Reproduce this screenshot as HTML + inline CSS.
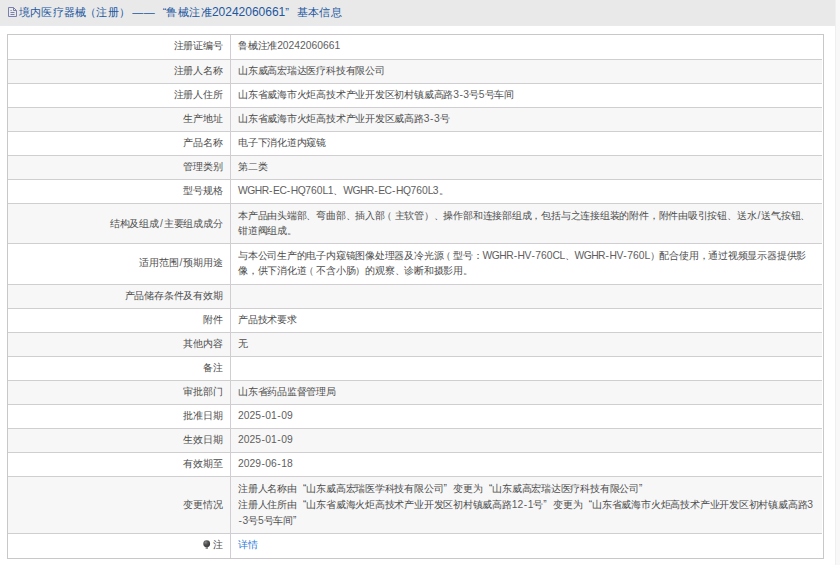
<!DOCTYPE html>
<html><head><meta charset="utf-8">
<style>
html,body{margin:0;padding:0;}
body{width:840px;height:565px;overflow:hidden;position:relative;background:#fff;font-family:"Liberation Sans",sans-serif;font-size:10px;color:#4d4d4d;letter-spacing:-0.22px;}
b{font-weight:normal;font-size:10.3px;letter-spacing:0;color:#5e5e5e;}
s{text-decoration:none;padding:0 0.51px;}
i{font-style:normal;padding:0 1.05px;}
u{text-decoration:none;letter-spacing:-0.5px;}
q{display:inline-block;width:9.78px;letter-spacing:0;}
q:before,q:after{content:none;}
em{font-style:normal;position:relative;}
.lp{left:-0.25em;} .dn{left:0;}
#hd .lp{left:-0.2em;margin-right:-2px;} #hd .rp{margin-right:2px;}
.qo{text-align:right;} .qc{text-align:left;}
#hd{position:absolute;left:0;top:0;width:835px;height:25px;background:#e9e9e9;border-bottom:1px solid #e9eaee;}
#hd .t{position:absolute;left:18.5px;top:3.6px;line-height:16px;color:#23579f;white-space:nowrap;font-size:11px;letter-spacing:0.375px;}
#hd .t b{font-size:12px;color:inherit;}
#hd .t q{width:11.375px;}
#hd svg{position:absolute;left:8px;top:7px;}
#rs{position:absolute;left:835px;top:0;width:4px;height:565px;background:#f8f8f8;border-left:1px solid #efefef;}
#tb{position:absolute;left:7px;top:34px;width:815px;height:523px;border:1px solid #c9c7ca;}
.r{position:absolute;left:8px;width:814px;border-top:1px solid #d0ced1;}
.g{background:#f7f7f7;}
.vd{position:absolute;left:230px;top:35px;width:1px;height:523px;background:#d0ced1;}
.l{position:absolute;right:617.5px;white-space:nowrap;text-align:right;line-height:15px;}
.v{position:absolute;left:238px;white-space:nowrap;line-height:15px;}
.v a{color:#2f7bd6;text-decoration:none;}
</style></head><body>

<div id="hd"><svg width="9" height="10" viewBox="0 0 9 10"><path d="M0.5 0.5H5.5L8.5 3.5V9.5H0.5Z M5.5 0.5V3.5H8.5 M2.5 3.5h1.2 M2.5 5.5h4 M2.5 7.5h4" fill="none" stroke="#7a80ae" stroke-width="1"/></svg><div class="t">境内医疗器械<em class="lp">（</em>注册<em class="rp">）</em>——<q class="qo">“</q>鲁械注准<b>20242060661</b><q class="qc">”</q>基本信息</div></div>
<div id="rs"></div><div id="tb"></div>
<div class="r g" style="top:59px;height:23px"></div>
<div class="r" style="top:83px;height:23px"></div>
<div class="r g" style="top:107px;height:23px"></div>
<div class="r" style="top:131px;height:23px"></div>
<div class="r g" style="top:155px;height:23px"></div>
<div class="r" style="top:179px;height:23px"></div>
<div class="r g" style="top:203px;height:39px"></div>
<div class="r" style="top:243px;height:40px"></div>
<div class="r g" style="top:284px;height:23px"></div>
<div class="r" style="top:308px;height:23px"></div>
<div class="r g" style="top:332px;height:23px"></div>
<div class="r" style="top:356px;height:23px"></div>
<div class="r g" style="top:380px;height:23px"></div>
<div class="r" style="top:404px;height:23px"></div>
<div class="r g" style="top:428px;height:23px"></div>
<div class="r" style="top:452px;height:23px"></div>
<div class="r g" style="top:476px;height:56px"></div>
<div class="r" style="top:533px;height:24px"></div>
<div class="vd"></div>
<div class="l" style="top:38.40px">注册证编号</div>
<div class="v" style="top:38.40px;line-height:15px">鲁械注准<b>20242060661</b></div>
<div class="l" style="top:62.90px">注册人名称</div>
<div class="v" style="top:62.90px;line-height:15px">山东威高宏瑞达医疗科技有限公司</div>
<div class="l" style="top:86.90px">注册人住所</div>
<div class="v" style="top:86.90px;line-height:15px">山东省威海市火炬高技术产业开发区初村镇威高路<b>3<s>-</s>3</b>号<b>5</b>号车间</div>
<div class="l" style="top:110.90px">生产地址</div>
<div class="v" style="top:110.90px;line-height:15px">山东省威海市火炬高技术产业开发区威高路<b>3<s>-</s>3</b>号</div>
<div class="l" style="top:134.90px">产品名称</div>
<div class="v" style="top:134.90px;line-height:15px">电子下消化道内窥镜</div>
<div class="l" style="top:158.90px">管理类别</div>
<div class="v" style="top:158.90px;line-height:15px">第二类</div>
<div class="l" style="top:182.90px">型号规格</div>
<div class="v" style="top:182.90px;line-height:15px"><b><u>WGHR</u><s>-</s><u>EC</u><s>-</s><u>HQ</u>760<u>L</u>1</b><em class="dn">、</em><b><u>WGHR</u><s>-</s><u>EC</u><s>-</s><u>HQ</u>760<u>L</u>3</b>。</div>
<div class="l" style="top:215.50px">结构及组成<b><i>/</i></b>主要组成成分</div>
<div class="v" style="top:208.00px;line-height:15px">本产品由头端部<em class="dn">、</em>弯曲部<em class="dn">、</em>插入部<em class="lp">（</em>主软管<em class="rp">）</em><em class="dn">、</em>操作部和连接部组成，包括与之连接组装的附件，附件由吸引按钮<em class="dn">、</em>送水<b><i>/</i></b>送气按钮<em class="dn">、</em><br>钳道阀组成。</div>
<div class="l" style="top:255.40px">适用范围<b><i>/</i></b>预期用途</div>
<div class="v" style="top:247.90px;line-height:15px">与本公司生产的电子内窥镜图像处理器及冷光源<em class="lp">（</em>型号：<b><u>WGHR</u><s>-</s><u>HV</u><s>-</s>760<u>CL</u></b><em class="dn">、</em><b><u>WGHR</u><s>-</s><u>HV</u><s>-</s>760<u>L</u></b><em class="rp">）</em>配合使用，通过视频显示器提供影<br>像，供下消化道<em class="lp">（</em>不含小肠<em class="rp">）</em>的观察<em class="dn">、</em>诊断和摄影用。</div>
<div class="l" style="top:287.90px">产品储存条件及有效期</div>
<div class="l" style="top:311.90px">附件</div>
<div class="v" style="top:311.90px;line-height:15px">产品技术要求</div>
<div class="l" style="top:335.90px">其他内容</div>
<div class="v" style="top:335.90px;line-height:15px">无</div>
<div class="l" style="top:359.90px">备注</div>
<div class="l" style="top:383.90px">审批部门</div>
<div class="v" style="top:383.90px;line-height:15px">山东省药品监督管理局</div>
<div class="l" style="top:407.90px">批准日期</div>
<div class="v" style="top:407.90px;line-height:15px"><b>2025<s>-</s>01<s>-</s>09</b></div>
<div class="l" style="top:431.90px">生效日期</div>
<div class="v" style="top:431.90px;line-height:15px"><b>2025<s>-</s>01<s>-</s>09</b></div>
<div class="l" style="top:455.90px">有效期至</div>
<div class="v" style="top:455.90px;line-height:15px"><b>2029<s>-</s>06<s>-</s>18</b></div>
<div class="l" style="top:497.00px">变更情况</div>
<div class="v" style="top:480.50px;line-height:16px">注册人名称由<q class="qo">“</q>山东威高宏瑞医学科技有限公司<q class="qc">”</q>变更为<q class="qo">“</q>山东威高宏瑞达医疗科技有限公司<q class="qc">”</q><br>注册人住所由<q class="qo">“</q>山东省威海火炬高技术产业开发区初村镇威高路<b>12<s>-</s>1</b>号<q class="qc">”</q>变更为<q class="qo">“</q>山东省威海市火炬高技术产业开发区初村镇威高路<b>3</b><br><b><s>-</s>3</b>号<b>5</b>号车间<q class="qc">”</q></div>
<div class="l" style="top:537.40px"><svg width="8" height="10" viewBox="0 0 8 10" style="vertical-align:-2px;margin-right:1.5px"><defs><radialGradient id="bg" cx="0.35" cy="0.3" r="0.7"><stop offset="0" stop-color="#8a8a8a"/><stop offset="0.45" stop-color="#555"/><stop offset="1" stop-color="#3a3a3a"/></radialGradient></defs><circle cx="3.7" cy="3.7" r="3.4" fill="url(#bg)"/><rect x="2.6" y="6.9" width="2.4" height="2" fill="#8a8a8a"/></svg>注</div>
<div class="v" style="top:537.40px;line-height:15px"><a>详情</a></div>
</body></html>
